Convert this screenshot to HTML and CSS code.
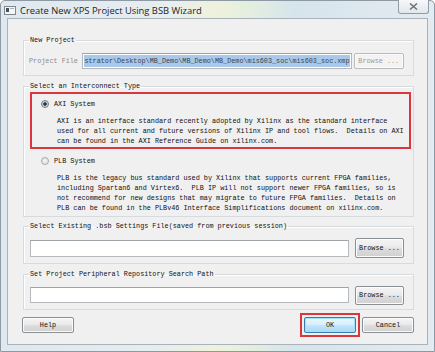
FILE: index.html
```html
<!DOCTYPE html>
<html lang="en">
<head>
  <meta charset="UTF-8">
  <title>Create New XPS Project Using BSB Wizard</title>
  <link rel="stylesheet" href="styles.css">
</head>
<body>
  <div class="window">
    <div class="titlebar">
      <svg class="app-icon" width="12" height="9" viewBox="0 0 12 9">
        <rect x="0.5" y="0.5" width="11" height="8" fill="#f4f6f8" stroke="#7d8790"/>
        <rect x="2" y="2" width="3" height="4" fill="#4a5258"/>
        <rect x="6" y="2" width="4" height="1" fill="#a9b1b8"/>
      </svg>
      <span class="title">Create New XPS Project Using BSB Wizard</span>
      <div class="close">
        <svg width="9" height="7" viewBox="0 0 9 7">
          <path d="M1 0.5 L8 6.5 M8 0.5 L1 6.5" stroke="#6f7880" stroke-width="1.6" fill="none"/>
        </svg>
      </div>
    </div>

    <div class="client">
      <fieldset class="group group-new">
        <legend>New Project</legend>
        <div class="file-row">
          <span class="file-label">Project File</span>
          <div class="field field-project"><span class="selected">strator\Desktop\MB_Demo\MB_Demo\MB_Demo\mis603_soc\mis603_soc.xmp</span></div>
          <button class="btn btn-browse btn-disabled">Browse ...</button>
        </div>
      </fieldset>

      <fieldset class="group group-type">
        <legend>Select an Interconnect Type</legend>
        <div class="option option-marked">
          <div class="radio-row"><span class="radio radio-on"></span>AXI System</div>
          <p class="desc">AXI is an interface standard recently adopted by Xilinx as the standard interface
used for all current and future versions of Xilinx IP and tool flows.  Details on AXI
can be found in the AXI Reference Guide on xilinx.com.</p>
        </div>
        <div class="option">
          <div class="radio-row"><span class="radio"></span>PLB System</div>
          <p class="desc">PLB is the legacy bus standard used by Xilinx that supports current FPGA families,
including Spartan6 and Virtex6.  PLB IP will not support newer FPGA families, so is
not recommend for new designs that may migrate to future FPGA families.  Details on
PLB can be found in the PLBv46 Interface Simplifications document on xilinx.com.</p>
        </div>
      </fieldset>

      <fieldset class="group group-bsb">
        <legend>Select Existing .bsb Settings File(saved from previous session)</legend>
        <div class="path-row path-row-tall">
          <div class="field field-path"></div>
          <button class="btn btn-browse">Browse ...</button>
        </div>
      </fieldset>

      <fieldset class="group group-repo">
        <legend>Set Project Peripheral Repository Search Path</legend>
        <div class="path-row">
          <div class="field field-path"></div>
          <button class="btn btn-browse">Browse ...</button>
        </div>
      </fieldset>

      <div class="actions">
        <button class="btn btn-action">Help</button>
        <span class="spacer"></span>
        <span class="ok-mark"><button class="btn btn-action btn-default">OK</button></span>
        <button class="btn btn-action">Cancel</button>
      </div>
    </div>
  </div>
</body>
</html>
```

FILE: styles.css
```css
* {
  box-sizing: border-box;
}
body {
  margin: 0;
  background: #ffffff;
  font-family: "Liberation Mono", "DejaVu Sans Mono", monospace;
  font-size: 6.8px;
  color: #111111;
}
.window {
  width: 435px;
  height: 352px;
  padding: 0 6px 6px 6px;
  border: 1px solid #8d9aa4;
  border-radius: 5px 5px 0 0;
  background: linear-gradient(90deg, #dfe8ee 0%, #e6edf1 35%, #eef2dc 50%, #e3eee0 58%, #d6e4ec 68%, #e4ebf0 100%);
  display: flex;
  flex-direction: column;
}
.titlebar {
  height: 17px;
  display: flex;
  align-items: center;
  position: relative;
}
.app-icon {
  margin: 1px 0 0 -3px;
}
.title {
  margin-left: 4px;
  padding-top: 2px;
  font-family: "Open Sans", "Noto Sans", sans-serif;
  font-size: 9.4px;
  color: #1e1e1e;
}
.close {
  position: absolute;
  right: -1px;
  top: -1px;
  width: 31px;
  height: 14px;
  border: 1px solid #909ca6;
  border-top: none;
  border-radius: 0 0 3px 3px;
  background: linear-gradient(#f6f8fa, #e1e7ec);
  display: flex;
  align-items: center;
  justify-content: center;
}
.client {
  flex: 1;
  border: 1px solid #a9b3bb;
  background: #f0f0f0;
  padding: 16px 13px 0 14px;
}
.group {
  margin: 0 0 0 1px;
  min-width: 0;
  border: 1px solid #d6dbdf;
  box-shadow: inset 1px 1px 0 #ffffff;
  padding: 0 2px 0 6px;
}
.group legend {
  padding: 0 1px;
  margin-left: -1px;
  line-height: 10px;
  color: #111111;
}
.group-new {
  padding-top: 8px;
  padding-bottom: 6px;
}
.group-type {
  margin-top: 5px;
  padding-top: 1px;
}
.group-bsb {
  margin-top: 4px;
  padding-top: 7px;
  padding-bottom: 5px;
}
.group-repo {
  margin-top: 5px;
  padding-top: 7px;
  padding-bottom: 5px;
}
.file-row {
  display: flex;
  align-items: center;
  height: 16px;
  margin-left: -1px;
  margin-right: 7px;
}
.file-label {
  width: 54px;
  color: #8c8c8c;
}
.field {
  background: #ffffff;
  border: 1px solid #b5b9be;
  border-top-color: #9ea3a8;
}
.field-project {
  flex: 1;
  height: 16px;
  padding: 1px;
  display: flex;
}
.selected {
  flex: 1;
  background: #a9c9ea;
  color: #3a4450;
  line-height: 12px;
  white-space: nowrap;
  overflow: hidden;
}
.path-row {
  display: flex;
  align-items: center;
  height: 18px;
  margin-right: 7px;
}
.path-row-tall {
  height: 20px;
}
.field-path {
  flex: 1;
  height: 16px;
  margin-right: 6px;
}
.path-row-tall .field-path {
  height: 17px;
}
.btn {
  font-family: inherit;
  font-size: inherit;
  color: #111111;
  padding: 0;
  border: 1px solid #8a8f94;
  border-radius: 2px;
  background: linear-gradient(#f4f4f4 0%, #ebebeb 45%, #dcdcdc 55%, #d0d0d0 100%);
  box-shadow: inset 0 0 0 1px #fbfbfb;
}
.btn-browse {
  width: 49px;
  height: 19px;
}
.path-row-tall .btn-browse {
  height: 20px;
}
.btn-disabled {
  height: 16px;
  width: 51px;
  margin-left: 2px;
  color: #9a9a9a;
  border-color: #b7bcc0;
  background: #f3f3f3;
}
.option {
  border: 2px solid transparent;
  padding: 5px 0 1px 9px;
}
.option-marked {
  border-color: #d9363e;
}
.radio-row {
  display: flex;
  align-items: center;
  height: 10px;
}
.radio {
  width: 8px;
  height: 8px;
  border-radius: 50%;
  border: 1px solid #a5abb0;
  background: radial-gradient(circle, #f4f4f4 0%, #d9dcde 100%);
  margin-right: 5px;
}
.radio-on {
  border-color: #6e7a84;
  background: radial-gradient(circle, #2a3a48 0%, #2a3a48 35%, #c4ccd2 45%, #eef0f2 100%);
}
.desc {
  margin: 7px 0 0 16px;
  white-space: pre;
  line-height: 10px;
}
.actions {
  display: flex;
  align-items: center;
  margin-top: 3px;
  gap: 2px;
}
.actions > .btn:first-child {
  margin-top: 0;
}
.spacer {
  flex: 1;
}
.btn-action {
  width: 52px;
  height: 16px;
}
.ok-mark {
  display: flex;
  border: 2px solid #d9363e;
  padding: 2px;
}
.btn-default {
  border-color: #3d7bad;
  background: linear-gradient(#eaf6fd 0%, #d9f0fc 45%, #bee6fd 55%, #a7d9f5 100%);
  box-shadow: inset 0 0 0 1px #9ee3f7;
}
```
